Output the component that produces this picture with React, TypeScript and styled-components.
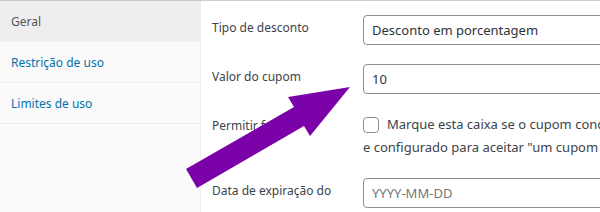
import React from "react";
import styled, { createGlobalStyle } from "styled-components";

const Global = createGlobalStyle`
  html, body { margin: 0; padding: 0; background: #fff; overflow: hidden; }
  body { font-family: "Noto Sans", "Open Sans", sans-serif; width: 600px; height: 212px; }
`;

const Page = styled.div`
  position: relative;
  width: 600px;
  height: 212px;
  border-top: 1px solid #ccc;
  box-sizing: border-box;
  display: flex;
  overflow: hidden;
`;

const Sidebar = styled.ul`
  list-style: none;
  margin: 0;
  padding: 0;
  width: 200px;
  flex: none;
  background: #fafafa;
  border-right: 1px solid #eee;
`;

const Tab = styled.li<{ $active?: boolean }>`
  height: 40px;
  border-bottom: 1px solid #eee;
  background: ${(p) => (p.$active ? "#eee" : "transparent")};
  color: ${(p) => (p.$active ? "#555" : "#0073aa")};
  font-size: 12px;
  display: flex;
  align-items: center;
  padding-left: 11px;
`;

const Main = styled.div`
  flex: 1;
  min-width: 0;
  padding: 14px 0 0 11px;
  display: flex;
  flex-direction: column;
  gap: 19px;
`;

const Row = styled.div`
  display: flex;
  align-items: flex-start;
`;

const Label = styled.div`
  width: 140px;
  margin-right: 11px;
  flex: none;
  font-size: 12px;
  line-height: 24px;
  padding-top: 1px;
  color: #3c434a;
`;

const Field = styled.div`
  flex: none;
  width: 400px;
  height: 30px;
  box-sizing: border-box;
  border: 1px solid #8c8f94;
  border-radius: 4px;
  padding: 0 8px;
  display: flex;
  align-items: center;
  font-size: 13px;
  color: #2c3338;
  background: #fff;
`;

const Placeholder = styled.span`
  color: #757575;
`;

const CheckWrap = styled.div`
  font-size: 13px;
  line-height: 23px;
  color: #3c434a;
  white-space: nowrap;
`;

const CheckLine = styled.div`
  display: flex;
  align-items: center;
  gap: 8px;
`;

const Box = styled.span`
  width: 16px;
  height: 16px;
  box-sizing: border-box;
  border: 1px solid #8c8f94;
  border-radius: 4px;
  background: #fff;
  flex: none;
`;

const Arrow = styled.svg`
  position: absolute;
  left: 0;
  top: -1px;
  pointer-events: none;
`;

export default function App() {
  return (
    <>
      <Global />
      <Page>
        <Sidebar>
          <Tab $active>Geral</Tab>
          <Tab>Restrição de uso</Tab>
          <Tab>Limites de uso</Tab>
        </Sidebar>
        <Main>
          <Row>
            <Label>Tipo de desconto</Label>
            <Field>Desconto em porcentagem</Field>
          </Row>
          <Row>
            <Label>Valor do cupom</Label>
            <Field>10</Field>
          </Row>
          <Row>
            <Label>Permitir frete</Label>
            <CheckWrap>
              <CheckLine>
                <Box />
                Marque esta caixa se o cupom concede frete grátis.
              </CheckLine>
              e configurado para aceitar "um cupom válido"
            </CheckWrap>
          </Row>
          <Row>
            <Label>Data de expiração do cupom</Label>
            <Field>
              <Placeholder>YYYY-MM-DD</Placeholder>
            </Field>
          </Row>
        </Main>
        <Arrow width="600" height="212" viewBox="0 0 600 212">
          <polygon
            points="186,169 294,107 288,97 350,87 310,136 304,126 197,188"
            fill="#7b02a9"
          />
        </Arrow>
      </Page>
    </>
  );
}
